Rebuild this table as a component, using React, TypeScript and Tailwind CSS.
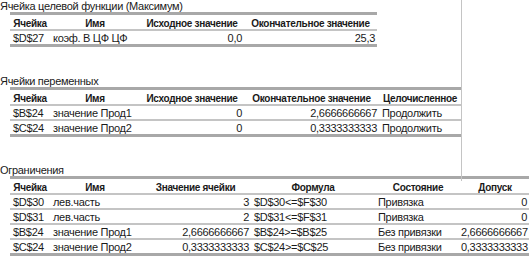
type Align = "l" | "r";

interface ReportTable {
  cols: string;
  headers: string[];
  align: Align[];
  rows: string[][];
}

const TARGET: ReportTable = {
  cols: "grid-cols-[40px_90px_104px_133px]",
  headers: ["Ячейка", "Имя", "Исходное значение", "Окончательное значение"],
  align: ["l", "l", "r", "r"],
  rows: [["$D$27", "коэф. В ЦФ ЦФ", "0,0", "25,3"]],
};

const VARIABLES: ReportTable = {
  cols: "grid-cols-[40px_90px_104px_135px_82px]",
  headers: ["Ячейка", "Имя", "Исходное значение", "Окончательное значение", "Целочисленное"],
  align: ["l", "l", "r", "r", "l"],
  rows: [
    ["$B$24", "значение Прод1", "0", "2,6666666667", "Продолжить"],
    ["$C$24", "значение Прод2", "0", "0,3333333333", "Продолжить"],
  ],
};

const CONSTRAINTS: ReportTable = {
  cols: "grid-cols-[40px_90px_111px_124px_86px_68px]",
  headers: ["Ячейка", "Имя", "Значение ячейки", "Формула", "Состояние", "Допуск"],
  align: ["l", "l", "r", "l", "l", "r"],
  rows: [
    ["$D$30", "лев.часть", "3", "$D$30<=$F$30", "Привязка", "0"],
    ["$D$31", "лев.часть", "2", "$D$31<=$F$31", "Привязка", "0"],
    ["$B$24", "значение Прод1", "2,6666666667", "$B$24>=$B$25", "Без привязки", "2,6666666667"],
    ["$C$24", "значение Прод2", "0,3333333333", "$C$24>=$C$25", "Без привязки", "0,3333333333"],
  ],
};

function Section({ title, table, className }: { title: string; table: ReportTable; className?: string }) {
  return (
    <div className={className}>
      <div className="h-[12px] leading-[12px] whitespace-nowrap">{title}</div>
      <div className="ml-[10px] w-max border-t-[3px] border-b-[3px] border-[#a8a8a8]">
        <div
          className={`grid ${table.cols} h-[16px] leading-[18px] text-[10px] font-bold tracking-[-0.3px] border-b-2 border-[#c4c4c4]`}
        >
          {table.headers.map((h) => (
            <div key={h} className="text-center whitespace-nowrap">
              {h}
            </div>
          ))}
        </div>
        {table.rows.map((row, i) => (
          <div
            key={i}
            className={`grid ${table.cols} leading-[15px] ${
              i < table.rows.length - 1 ? "border-b-2 border-[#c4c4c4] h-[15px]" : "h-[13px]"
            }`}
          >
            {row.map((cell, j) => (
              <div
                key={j}
                className={`whitespace-nowrap ${
                  table.align[j] === "r" ? "text-right pr-[2px]" : "text-left pl-[3px]"
                }`}
              >
                {cell}
              </div>
            ))}
          </div>
        ))}
      </div>
    </div>
  );
}

export default function App() {
  return (
    <div
      className="relative w-[531px] h-[261px] overflow-hidden bg-white text-[11px] tracking-[-0.3px] text-[#1a1a1a]"
      style={{ fontFamily: "'Liberation Sans', Arial, sans-serif" }}
    >
      {/* sheet page-break line */}
      <div className="absolute left-[461px] top-0 h-[181px] w-px bg-[#c4c4c4]" />

      <Section title="Ячейка целевой функции (Максимум)" table={TARGET} />
      <Section className="mt-[28px]" title="Ячейки переменных" table={VARIABLES} />
      <Section className="mt-[27px]" title="Ограничения" table={CONSTRAINTS} />
    </div>
  );
}
